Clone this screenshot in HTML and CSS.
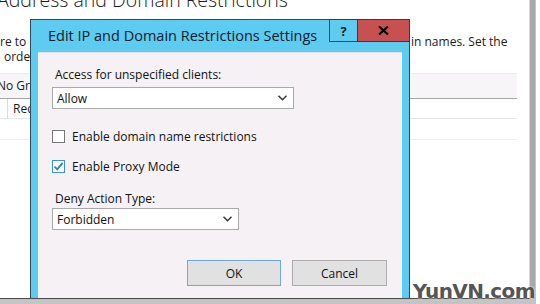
FILE: index.html
```html
<!DOCTYPE html>
<html lang="en">
<head>
  <meta charset="UTF-8">
  <title>Edit IP and Domain Restrictions Settings</title>
  <link rel="stylesheet" href="styles.css">
</head>
<body>
  <div class="frame">
    <div class="window">

      <div class="page">
        <div class="page-title">Address and Domain Restrictions</div>
        <div class="intro">
          <span class="intro-hidden">re to restrict access to content based on IP addresses or doma</span>
          <span>in names. Set the</span>
        </div>
        <div class="intro intro-second">order in which rules are processed.</div>

        <div class="grid">
          <div class="grid-toolbar">No Grouping</div>
          <div class="grid-head">
            <span class="grid-col-first"></span>
            <span>Requestor</span>
          </div>
          <div class="grid-row"></div>
        </div>
      </div>

      <div class="dialog">
        <div class="dialog-titlebar">
          <span class="dialog-title">Edit IP and Domain Restrictions Settings</span>
          <span class="title-btn help-btn">?</span>
          <span class="title-btn close-btn">
            <svg width="11" height="9" viewBox="0 0 11 9"><path d="M1 0.5 L10 8.5 M10 0.5 L1 8.5" stroke="#000" stroke-width="2.2"/></svg>
          </span>
        </div>
        <div class="dialog-body">
          <div class="field-label">Access for unspecified clients:</div>
          <div class="combo combo-wide">
            <span>Allow</span>
            <svg width="9" height="6" viewBox="0 0 9 6"><path d="M0.5 0.8 L4.5 4.8 L8.5 0.8" fill="none" stroke="#333" stroke-width="1.4"/></svg>
          </div>

          <div class="check-row first-check">
            <span class="checkbox"></span>
            <span>Enable domain name restrictions</span>
          </div>
          <div class="check-row">
            <span class="checkbox checked">
              <svg width="11" height="11" viewBox="0 0 11 11"><path d="M1.5 5.5 L4.2 8.3 L9.6 1.8" fill="none" stroke="#2a7fd0" stroke-width="1.8"/></svg>
            </span>
            <span>Enable Proxy Mode</span>
          </div>

          <div class="field-label deny-label">Deny Action Type:</div>
          <div class="combo combo-short">
            <span>Forbidden</span>
            <svg width="9" height="6" viewBox="0 0 9 6"><path d="M0.5 0.8 L4.5 4.8 L8.5 0.8" fill="none" stroke="#333" stroke-width="1.4"/></svg>
          </div>

          <div class="dialog-buttons">
            <span class="btn btn-default">OK</span>
            <span class="btn">Cancel</span>
          </div>
        </div>
      </div>
    </div>

    <div class="watermark">YunVN.com</div>
  </div>
</body>
</html>
```

FILE: styles.css
```css
body {
  margin: 0;
  padding: 0;
  width: 540px;
  height: 304px;
  overflow: hidden;
  background: #ffffff;
  font-family: 'Open Sans', 'Noto Sans', sans-serif;
  color: #1a1a1a;
}

.frame {
  position: relative;
  width: 536px;
  height: 304px;
  background: #c4c4c4;
}

.window {
  position: relative;
  width: 529px;
  height: 298px;
  overflow: hidden;
  background: #ffffff;
  border-right: 1px solid #d6d6d6;
  border-bottom: 1px solid #4a4a4a;
  box-shadow: 5px 0 0 #a9a9a9;
}

/* background page */

.page {
  font-size: 12px;
}

.page-title {
  font-size: 19.5px;
  font-weight: 300;
  line-height: 24px;
  margin-top: -12px;
  margin-left: -3px;
  white-space: nowrap;
}

.intro {
  display: flex;
  white-space: nowrap;
  line-height: 16px;
  margin-top: 22px;
}

.intro-hidden {
  width: 411px;
  overflow: hidden;
}

.intro-second {
  margin-top: -1px;
  padding-left: 4px;
}

.grid {
  margin-top: 8px;
  width: 517px;
  border-top: 1px solid #ececec;
}

.grid-toolbar {
  line-height: 24px;
  height: 24px;
  background: #f7f5f7;
  margin-left: -3px;
}

.grid-head {
  display: flex;
  height: 19px;
  line-height: 19px;
  border-top: 1px solid #a7a5a7;
  border-bottom: 1px solid #e6e6e6;
}

.grid-col-first {
  width: 7px;
  border-right: 1px solid #dcdcdc;
  margin-right: 5px;
}

.grid-row {
  height: 20px;
  border-bottom: 1px solid #efefef;
}

/* dialog */

.dialog {
  position: absolute;
  left: 30px;
  top: 19px;
  width: 364px;
  height: 300px;
  background: #5ecbf1;
  border: 1px solid #2f4a5c;
  padding: 0 7px;
}

.dialog-titlebar {
  display: flex;
  align-items: flex-start;
  height: 32px;
}

.dialog-title {
  flex: 1;
  min-width: 0;
  font-size: 14.5px;
  line-height: 20px;
  margin-top: 6px;
  margin-left: 10px;
  color: #12202c;
  white-space: nowrap;
}

.title-btn {
  display: flex;
  align-items: center;
  justify-content: center;
  height: 21px;
  margin-top: -1px;
  border: 1px solid #2f3f4a;
  font-weight: bold;
  font-size: 13px;
}

.help-btn {
  width: 27px;
  background: #5ecbf1;
  border-right: none;
}

.close-btn {
  width: 51px;
  margin-right: -8px;
  background: #c75050;
}

.dialog-body {
  height: 260px;
  background: #f5f1f5;
  padding: 14px 15px 0 14px;
  font-size: 12px;
  color: #111;
  border-top: 1px solid #e3e0e3;
}

.field-label {
  padding-left: 3px;
  line-height: 16px;
  height: 16px;
}

.combo {
  display: flex;
  align-items: center;
  justify-content: space-between;
  box-sizing: border-box;
  height: 22px;
  margin-top: 4px;
  padding: 0 6px 0 4px;
  background: #ffffff;
  border: 1px solid #a9a9a9;
}

.combo-wide {
  width: 242px;
}

.combo-short {
  width: 187px;
  margin-top: 1px;
}

.check-row {
  display: flex;
  align-items: center;
  gap: 7px;
  height: 18px;
  margin-top: 12px;
}

.first-check {
  margin-top: 18px;
}

.checkbox {
  display: flex;
  align-items: center;
  justify-content: center;
  box-sizing: border-box;
  width: 13px;
  height: 13px;
  background: #ffffff;
  border: 1px solid #777777;
}

.checkbox.checked {
  border-color: #3d8fd8;
}

.deny-label {
  margin-top: 16px;
}

.dialog-buttons {
  display: flex;
  justify-content: flex-end;
  gap: 11px;
  margin-top: 30px;
}

.btn {
  display: flex;
  align-items: center;
  justify-content: center;
  box-sizing: border-box;
  width: 95px;
  height: 26px;
  background: #e1e1e1;
  border: 1px solid #adadad;
}

.btn-default {
  width: 94px;
  border-color: #6fa8dc;
}

/* watermark */

.watermark {
  position: absolute;
  right: 1px;
  bottom: 1px;
  font-family: 'DejaVu Sans', sans-serif;
  font-weight: bold;
  font-size: 20px;
  line-height: 24px;
  letter-spacing: -0.6px;
  color: #555555;
  text-shadow: 0 0 2px #ffffff, 0 0 1px #ffffff;
}
```
